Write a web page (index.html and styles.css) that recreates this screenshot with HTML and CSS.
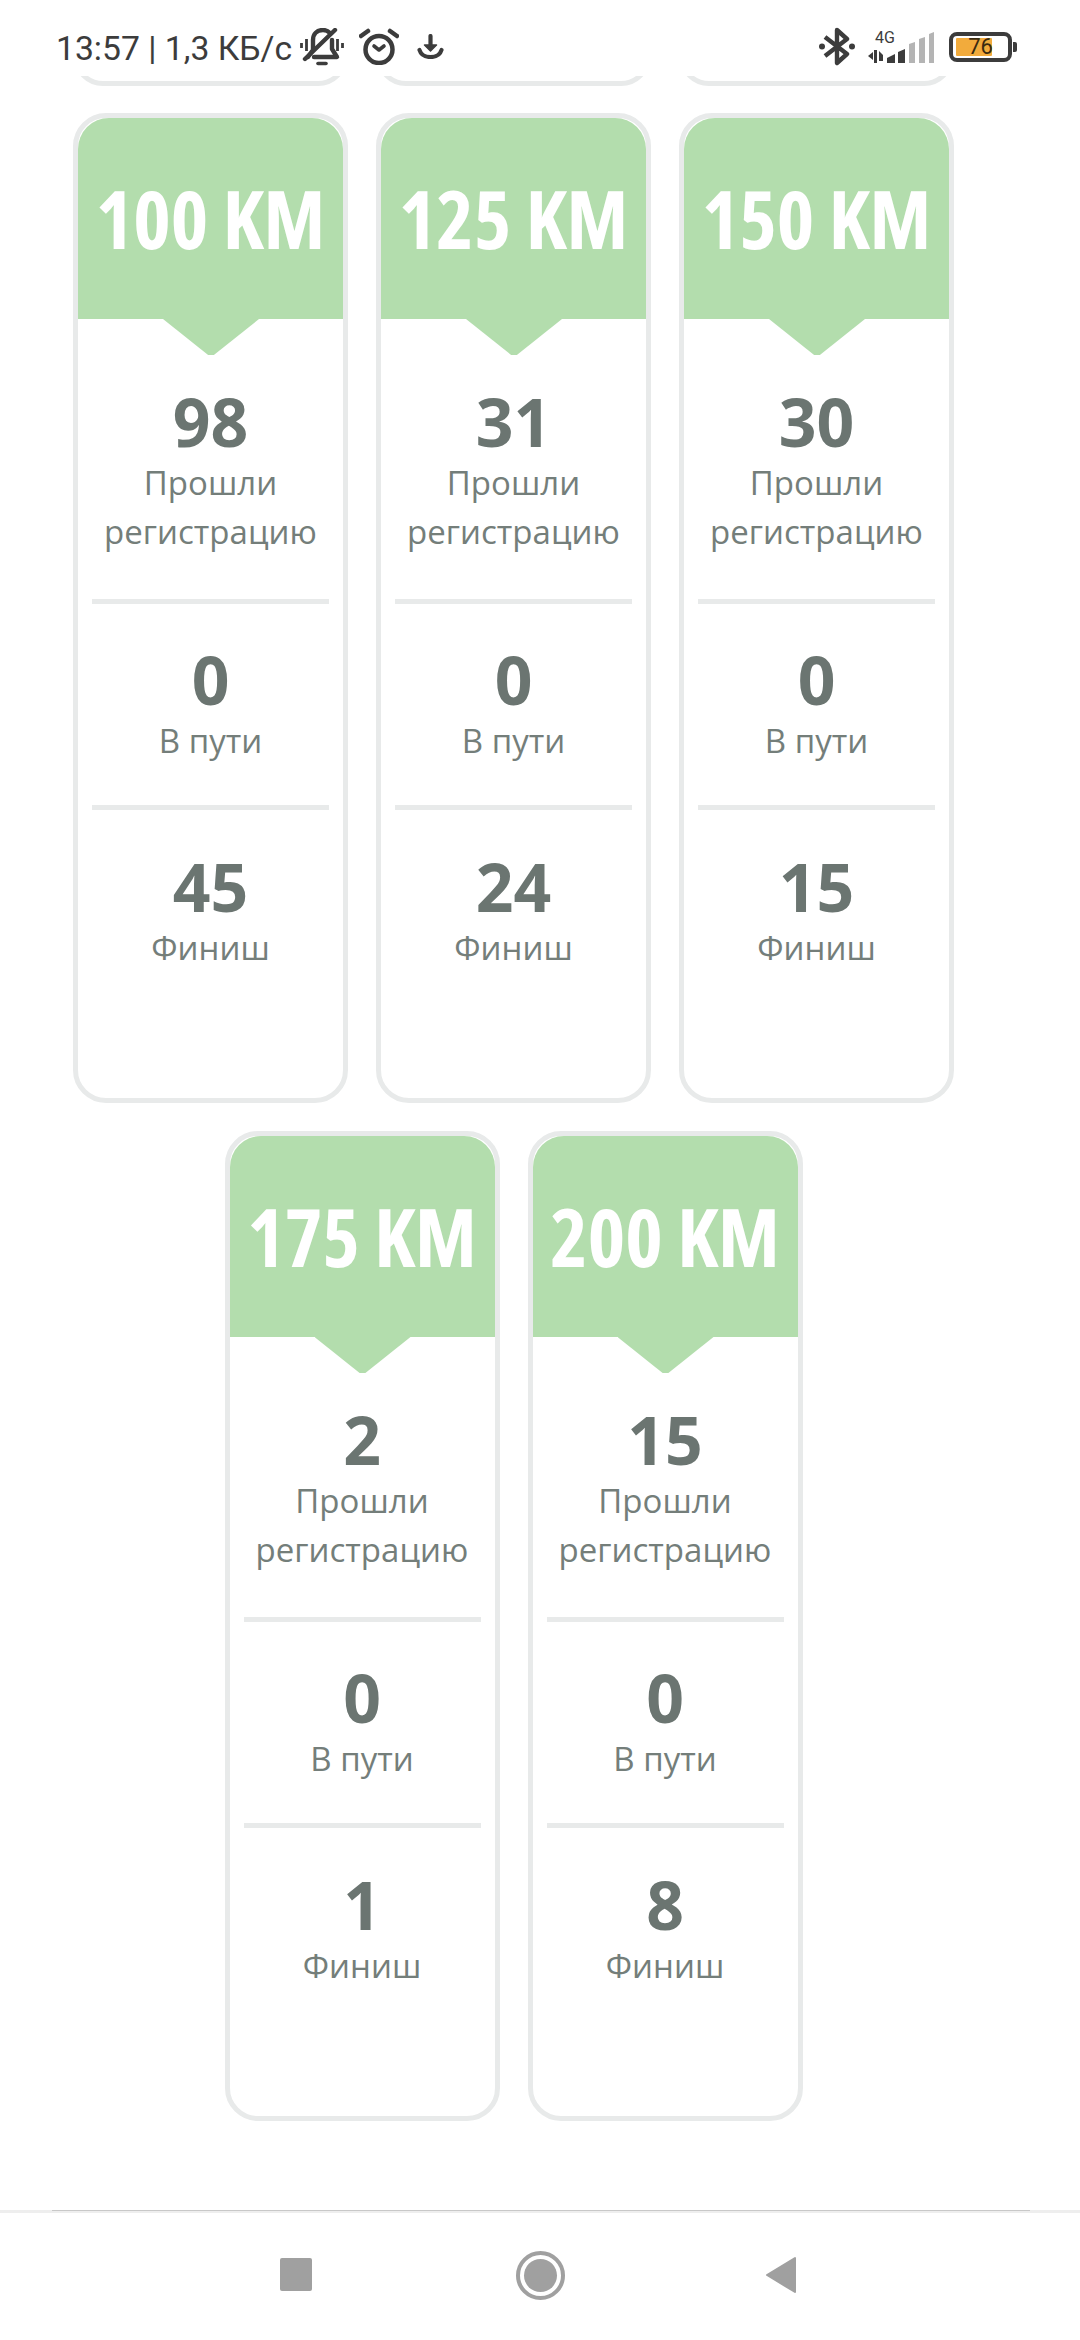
FILE: index.html
```html
<!DOCTYPE html>
<html lang="en">
<head>
  <meta charset="UTF-8">
  <meta name="viewport" content="width=device-width, initial-scale=1.0">
  <title>Дистанции</title>
  <link rel="stylesheet" href="styles.css">
</head>
<body>
  <div class="status-bar">
    <span class="status-text">13:57 | 1,3 КБ/с</span>
    <svg class="icon-bell" viewBox="0 0 44 39" fill="none" stroke="#3c3c3c" stroke-width="4.4" stroke-linecap="round" stroke-linejoin="round">
      <path d="M8 29 L13 22 V12 C13 6 17 2 23 2 C26 2 28 3 30 5"/>
      <path d="M32 12 V21 L37 29 H14"/>
      <path d="M5 31 L35 2"/>
      <path d="M1.500 15 V20 M6.500 11 V23 M37.500 11 V23 M42.500 15 V20" stroke-width="2.800" stroke-linecap="butt"/>
      <path d="M18 35.500 H26" stroke-width="3.600"/>
    </svg>
    <svg class="icon-alarm" viewBox="0 0 40 37" fill="none" stroke="#3c3c3c" stroke-width="4.500" stroke-linecap="round" stroke-linejoin="round">
      <circle cx="20" cy="21.500" r="13.500"/>
      <path d="M15 18 L20 22 L25 18" stroke-width="3.600"/>
      <path d="M2 8 L9 3 M31 3 L38 8"/>
    </svg>
    <svg class="icon-download" viewBox="0 0 27 25" fill="none" stroke="#3c3c3c" stroke-width="4.200" stroke-linecap="round" stroke-linejoin="round">
      <path d="M13.500 2 V12" />
      <path d="M7.500 11 H19.500 L13.500 17 Z" fill="#3c3c3c" stroke-width="1.500"/>
      <path d="M2.500 16 C4 21 8 23 13.500 23 C19 23 23 21 24.500 16"/>
    </svg>
    <span class="status-gap"></span>
    <svg class="icon-bt" viewBox="0 0 36 39" fill="none" stroke="#3c3c3c" stroke-width="4.400" stroke-linejoin="round">
      <path d="M6 10 L28 27 L18 36 V3 L28 12 L6 29"/>
      <circle cx="3" cy="19.500" r="3" fill="#3c3c3c" stroke="none"/>
      <circle cx="33" cy="19.500" r="3" fill="#3c3c3c" stroke="none"/>
    </svg>
    <div class="signal">
      <span class="signal-label">4G</span>
      <svg class="signal-bars" viewBox="0 0 67 31">
        <path d="M0 24 L5 20 V28 Z M6 18 H9 V31 H6 Z M11 19 L15 23 V29 H11 Z" fill="#3c3c3c"/>
        <path d="M19 26 L27 22 V31 H19 Z M30 20 L37 17 V31 H30 Z" fill="#3c3c3c"/>
        <path d="M41 12 L47 10 V31 H41 Z M51 7 L57 5 V31 H51 Z M61 2 L66 0 V31 H61 Z" fill="#b4b4b4"/>
      </svg>
    </div>
    <div class="battery">
      <div class="battery-body">
        <span class="battery-fill"></span>
        <span class="battery-level">76</span>
      </div>
      <span class="battery-nub"></span>
    </div>
  </div>

  <div class="page">
    <div class="row row-cut">
      <div class="card-stub"></div>
      <div class="card-stub"></div>
      <div class="card-stub"></div>
    </div>

    <div class="row">
      <div class="card">
        <div class="card-head">100 KM</div>
        <div class="stat stat-first">
          <div class="stat-num">98</div>
          <div class="stat-label">Прошли регистрацию</div>
        </div>
        <div class="stat">
          <div class="stat-num">0</div>
          <div class="stat-label">В пути</div>
        </div>
        <div class="stat">
          <div class="stat-num">45</div>
          <div class="stat-label">Финиш</div>
        </div>
      </div>
      <div class="card">
        <div class="card-head">125 KM</div>
        <div class="stat stat-first">
          <div class="stat-num">31</div>
          <div class="stat-label">Прошли регистрацию</div>
        </div>
        <div class="stat">
          <div class="stat-num">0</div>
          <div class="stat-label">В пути</div>
        </div>
        <div class="stat">
          <div class="stat-num">24</div>
          <div class="stat-label">Финиш</div>
        </div>
      </div>
      <div class="card">
        <div class="card-head">150 KM</div>
        <div class="stat stat-first">
          <div class="stat-num">30</div>
          <div class="stat-label">Прошли регистрацию</div>
        </div>
        <div class="stat">
          <div class="stat-num">0</div>
          <div class="stat-label">В пути</div>
        </div>
        <div class="stat">
          <div class="stat-num">15</div>
          <div class="stat-label">Финиш</div>
        </div>
      </div>
    </div>

    <div class="row">
      <div class="card">
        <div class="card-head">175 KM</div>
        <div class="stat stat-first">
          <div class="stat-num">2</div>
          <div class="stat-label">Прошли регистрацию</div>
        </div>
        <div class="stat">
          <div class="stat-num">0</div>
          <div class="stat-label">В пути</div>
        </div>
        <div class="stat">
          <div class="stat-num">1</div>
          <div class="stat-label">Финиш</div>
        </div>
      </div>
      <div class="card">
        <div class="card-head">200 KM</div>
        <div class="stat stat-first">
          <div class="stat-num">15</div>
          <div class="stat-label">Прошли регистрацию</div>
        </div>
        <div class="stat">
          <div class="stat-num">0</div>
          <div class="stat-label">В пути</div>
        </div>
        <div class="stat">
          <div class="stat-num">8</div>
          <div class="stat-label">Финиш</div>
        </div>
      </div>
    </div>
  </div>

  <div class="nav-bar">
    <span class="nav-square"></span>
    <span class="nav-home"><span class="nav-home-dot"></span></span>
    <svg class="nav-back" viewBox="0 0 32 38"><path d="M30 2 V36 L2 19 Z" fill="#a0a0a0" stroke="#a0a0a0" stroke-width="2" stroke-linejoin="round"/></svg>
  </div>
</body>
</html>
```

FILE: styles.css
```css
* { box-sizing: border-box; }
html, body { margin: 0; padding: 0; }
body { width: 1080px; height: 2340px; display: flex; flex-direction: column; background: #fff; font-family: "Open Sans", sans-serif; color: #6b7571; overflow: hidden; }

.status-bar { height: 76px; flex: none; display: flex; align-items: flex-start; padding-left: 56px; color: #3c3c3c; }
.status-text { width: 244px; font-family: Roboto, sans-serif; font-size: 33.7px; line-height: 39px; margin-top: 29px; white-space: nowrap; }
.icon-bell { width: 44px; height: 39px; margin-top: 28px; }
.icon-alarm { width: 40px; height: 37px; margin-top: 28px; margin-left: 15px; }
.icon-download { width: 27px; height: 25px; margin-top: 34px; margin-left: 18px; }
.status-gap { flex: 1; }
.icon-bt { width: 36px; height: 39px; margin-top: 27px; }
.signal { width: 67px; height: 43px; margin-top: 30px; margin-left: 13px; position: relative; }
.signal-label { position: absolute; left: 7px; top: 1px; font-family: Roboto, sans-serif; font-size: 16px; line-height: 14px; }
.signal-bars { position: absolute; left: 0; top: 2px; width: 67px; height: 31px; }
.battery { display: flex; align-items: center; margin-top: 32px; margin-left: 14px; margin-right: 63px; }
.battery-body { width: 63px; height: 30px; border: 4px solid #3c3c3c; border-radius: 8px; position: relative; display: flex; align-items: center; justify-content: center; }
.battery-fill { position: absolute; left: 3px; top: 2px; bottom: 2px; width: 36px; background: #f2ab3c; border-radius: 1px; }
.battery-level { position: relative; font-family: Roboto, sans-serif; font-size: 22px; line-height: 22px; color: #3a2a10; }
.battery-nub { width: 4px; height: 10px; background: #3c3c3c; border-radius: 0 2px 2px 0; margin-left: 1px; }

.page { flex: 1; padding-right: 53px; display: flex; flex-direction: column; gap: 28px; }
.row { display: flex; justify-content: center; gap: 28px; }
.row-cut { height: 10px; overflow: hidden; align-items: flex-end; margin-bottom: -1px; }
.card-stub { width: 275px; height: 60px; flex: none; border: 5px solid #e8eaea; border-radius: 33px; }

.card { width: 275px; height: 990px; flex: none; border: 5px solid #e8eaea; border-radius: 33px; background: #fff; }
.card-head { position: relative; height: 201px; padding-top: 47px; background: #b3ddad; border-radius: 31px 31px 0 0; color: #fff; font-size: 80px; line-height: 106px; font-weight: 700; font-stretch: 75%; text-align: center; white-space: nowrap; }
.card-head::after { content: ""; position: absolute; left: 85px; top: 100%; width: 96px; height: 36px; background: #b3ddad; clip-path: polygon(0 0, 100% 0, 53% 100%, 47% 100%); }

.stat { margin: 0 14px; padding: 40px 0; text-align: center; border-bottom: 5px solid #e8eaea; }
.stat:last-child { padding-top: 41px; border-bottom: none; }
.stat-first { padding-top: 67px; padding-bottom: 43px; }
.stat-num { font-size: 66px; line-height: 70px; font-weight: 700; font-stretch: 95%; margin-bottom: 2px; }
.stat-label { font-size: 33px; line-height: 49px; color: #747e7a; }

.nav-bar { height: 130px; flex: none; border-top: 3px solid #eeeeee; position: relative; display: flex; align-items: flex-start; }
.nav-bar::before { content: ""; position: absolute; left: 52px; right: 50px; top: -3px; height: 1px; background: #c8c8c8; }
.nav-square { width: 32px; height: 33px; margin-top: 45px; margin-left: 280px; background: #a0a0a0; border-radius: 2px; }
.nav-home { width: 49px; height: 49px; margin-top: 38px; margin-left: 204px; border: 4px solid #a0a0a0; border-radius: 50%; display: flex; align-items: center; justify-content: center; }
.nav-home-dot { width: 33px; height: 33px; background: #a0a0a0; border-radius: 50%; }
.nav-back { width: 32px; height: 38px; margin-top: 43px; margin-left: 200px; }
```
